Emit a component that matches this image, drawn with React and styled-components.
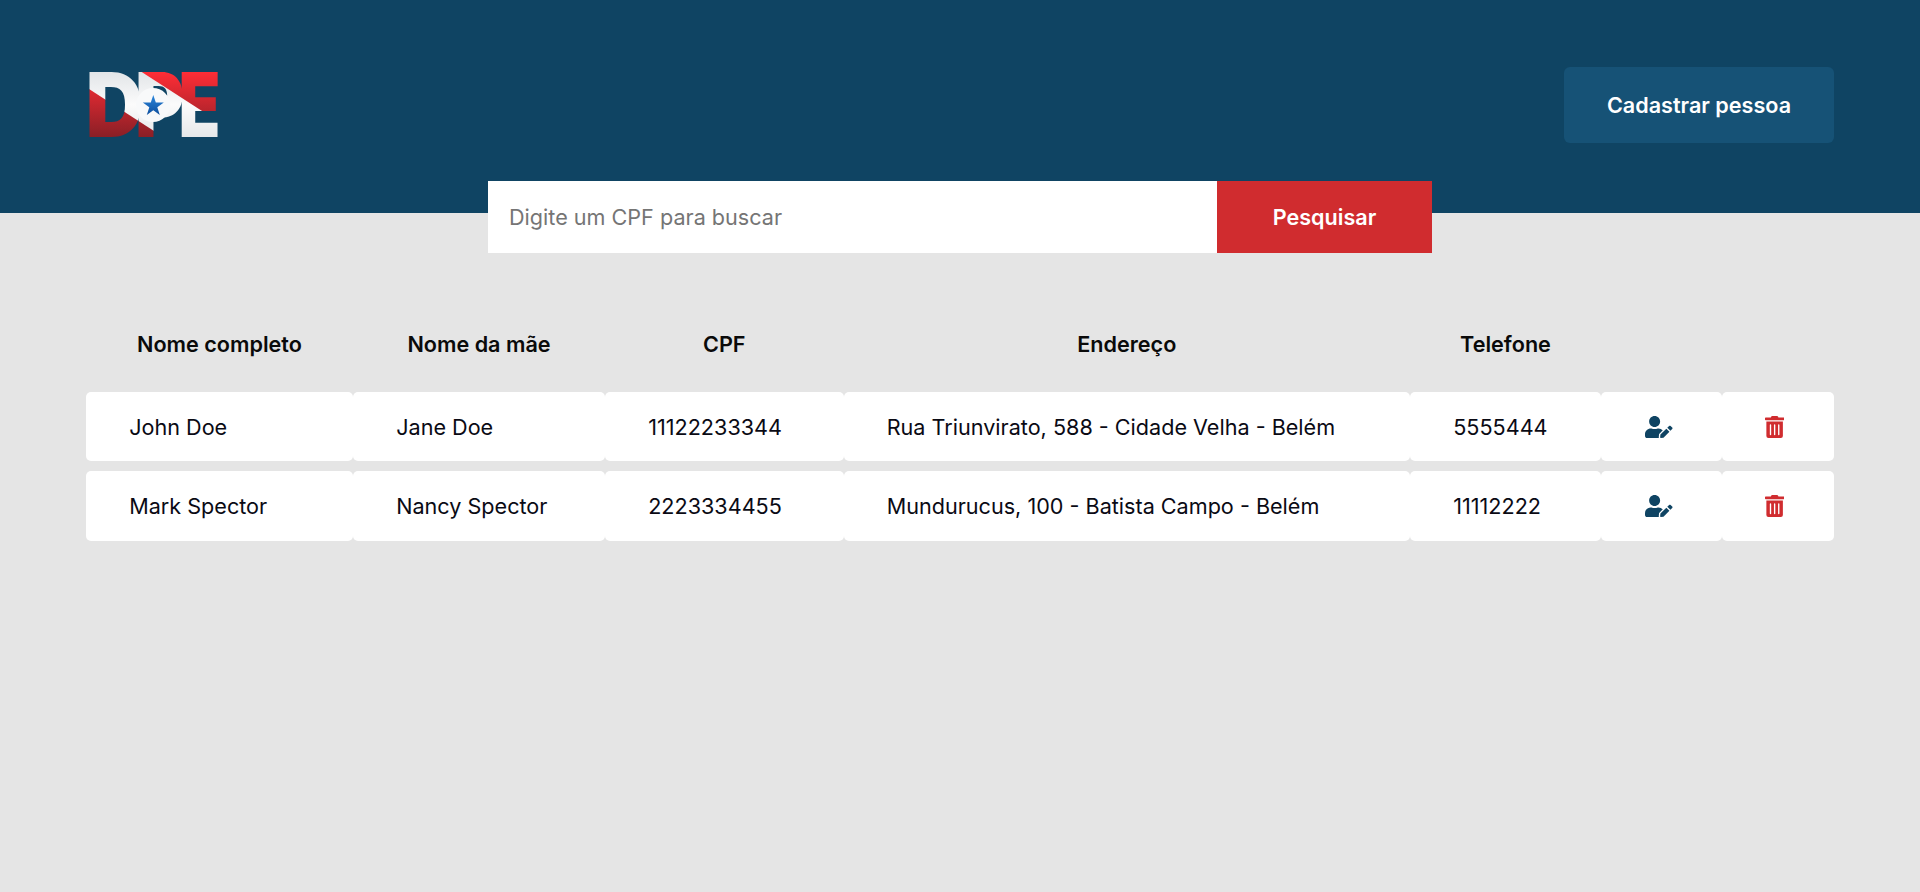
import React from "react";
import styled, { createGlobalStyle } from "styled-components";
import { FaUserEdit, FaTrashAlt } from "react-icons/fa";

const GlobalStyle = createGlobalStyle`
  * {
    box-sizing: border-box;
  }

  html,
  body {
    margin: 0;
    min-height: 100%;
    background: #e5e5e5;
    font-family: Inter, "Noto Sans", sans-serif;
    font-size: 21.6px;
    color: #0a0a14;
  }
`;

const Page = styled.div`
  min-height: 892px;
`;

const Header = styled.header`
  height: 213px;
  background: #0f4463;
  padding: 67px 86px 0 86px;
  display: flex;
  justify-content: space-between;
  align-items: flex-start;
`;

const LogoWrap = styled.div`
  width: 136px;
  height: 74px;
`;

const RegisterButton = styled.button`
  width: 270px;
  height: 76px;
  border: none;
  border-radius: 6px;
  background: #165276;
  color: #fff;
  font-family: inherit;
  font-size: 21.6px;
  font-weight: 600;
`;

const SearchForm = styled.form`
  width: 944px;
  height: 72px;
  margin: -32px auto 0;
  display: flex;
`;

const SearchInput = styled.input`
  flex: 1;
  border: none;
  outline: none;
  padding: 0 21px;
  background: #fff;
  font-family: inherit;
  font-size: 21.6px;

  &::placeholder {
    color: #757575;
    opacity: 1;
  }
`;

const SearchButton = styled.button`
  width: 215px;
  border: none;
  background: #d02c2f;
  color: #fff;
  font-family: inherit;
  font-size: 21.6px;
  font-weight: 600;
`;

const Table = styled.div`
  margin: 63px 86px 0;
`;

const columns = "267px 252px 238.5px 566.5px 191px 121px 112px";

const HeadRow = styled.div`
  display: grid;
  grid-template-columns: ${columns};
  height: 76px;
  padding-bottom: 20px;
  align-items: center;
`;

const HeadCell = styled.div`
  text-align: center;
  font-weight: 600;
  color: #0a0a0a;
`;

const Rows = styled.div`
  display: grid;
  grid-template-rows: 69px 70px;
  row-gap: 10px;
`;

const Row = styled.div`
  display: grid;
  grid-template-columns: ${columns};
`;

const Cell = styled.div`
  display: flex;
  align-items: center;
  padding-left: 43.2px;
  background: #fff;
  border-radius: 5px;
  white-space: nowrap;
`;

const IconCell = styled(Cell)`
  padding-left: ${(p) => p.$pad}px;
  color: ${(p) => p.$color};

  svg {
    width: ${(p) => p.$width}px;
    height: 22px;
  }
`;

const people = [
  {
    name: "John Doe",
    mother: "Jane Doe",
    cpf: "11122233344",
    address: "Rua Triunvirato, 588 - Cidade Velha - Belém",
    phone: "5555444",
  },
  {
    name: "Mark Spector",
    mother: "Nancy Spector",
    cpf: "2223334455",
    address: "Mundurucus, 100 - Batista Campo - Belém",
    phone: "11112222",
  },
];

const headings = ["Nome completo", "Nome da mãe", "CPF", "Endereço", "Telefone"];

function Logo() {
  return (
    <svg width="136" height="74" viewBox="0 0 136 74">
      <defs>
        <linearGradient id="red" gradientUnits="userSpaceOnUse" x1="0" y1="5" x2="0" y2="70">
          <stop offset="0" stopColor="#ff2d36" />
          <stop offset="1" stopColor="#8a1f26" />
        </linearGradient>
        <linearGradient id="white" gradientUnits="userSpaceOnUse" x1="0" y1="5" x2="0" y2="70">
          <stop offset="0" stopColor="#e2e5e8" />
          <stop offset="0.5" stopColor="#fbfbfb" />
          <stop offset="1" stopColor="#e6e8ea" />
        </linearGradient>
        <linearGradient id="star" x1="0" y1="0" x2="0" y2="1">
          <stop offset="0" stopColor="#2b86dc" />
          <stop offset="1" stopColor="#0e4f9e" />
        </linearGradient>
        <clipPath id="letters">
          <text y="70" fontFamily="Inter" fontWeight="900" fontSize="89" transform="translate(-0.3 0) scale(0.9 1)">D</text>
          <text y="70" fontFamily="Inter" fontWeight="900" fontSize="89" transform="translate(49 0) scale(0.85 1)">P</text>
          <text y="70" fontFamily="Inter" fontWeight="900" fontSize="89" transform="translate(92.5 0) scale(0.77 1)">E</text>
        </clipPath>
        <clipPath id="band">
          <polygon points="3,22 55.7,5 136,56.8 80,71.7" />
        </clipPath>
      </defs>
      <g clipPath="url(#letters)">
        <rect width="136" height="74" fill="url(#white)" />
        <polygon points="3,22 80,71.7 80,74 0,74 0,22" fill="url(#red)" />
        <polygon points="55.7,5 136,56.8 136,0 55.7,0" fill="url(#red)" />
      </g>
      <g clipPath="url(#band)">
        <circle cx="67" cy="38" r="17" fill="#f8f9fa" />
      </g>
      <polygon
        points="67.3,28 69.8,35.6 77.8,35.6 71.3,40.3 73.8,47.9 67.3,43.2 60.8,47.9 63.3,40.3 56.8,35.6 64.8,35.6"
        fill="url(#star)"
      />
    </svg>
  );
}

export default function App() {
  return (
    <Page>
      <GlobalStyle />
      <Header>
        <LogoWrap>
          <Logo />
        </LogoWrap>
        <RegisterButton type="button">Cadastrar pessoa</RegisterButton>
      </Header>
      <SearchForm>
        <SearchInput placeholder="Digite um CPF para buscar" />
        <SearchButton type="button">Pesquisar</SearchButton>
      </SearchForm>
      <Table>
        <HeadRow>
          {headings.map((h) => (
            <HeadCell key={h}>{h}</HeadCell>
          ))}
        </HeadRow>
        <Rows>
          {people.map((p) => (
            <Row key={p.cpf}>
              <Cell>{p.name}</Cell>
              <Cell>{p.mother}</Cell>
              <Cell>{p.cpf}</Cell>
              <Cell>{p.address}</Cell>
              <Cell>{p.phone}</Cell>
              <IconCell $color="#0f4463" $width={27.5} $pad={44}>
                <FaUserEdit />
              </IconCell>
              <IconCell $color="#d02c2f" $width={19.25} $pad={43.2}>
                <FaTrashAlt />
              </IconCell>
            </Row>
          ))}
        </Rows>
      </Table>
    </Page>
  );
}
